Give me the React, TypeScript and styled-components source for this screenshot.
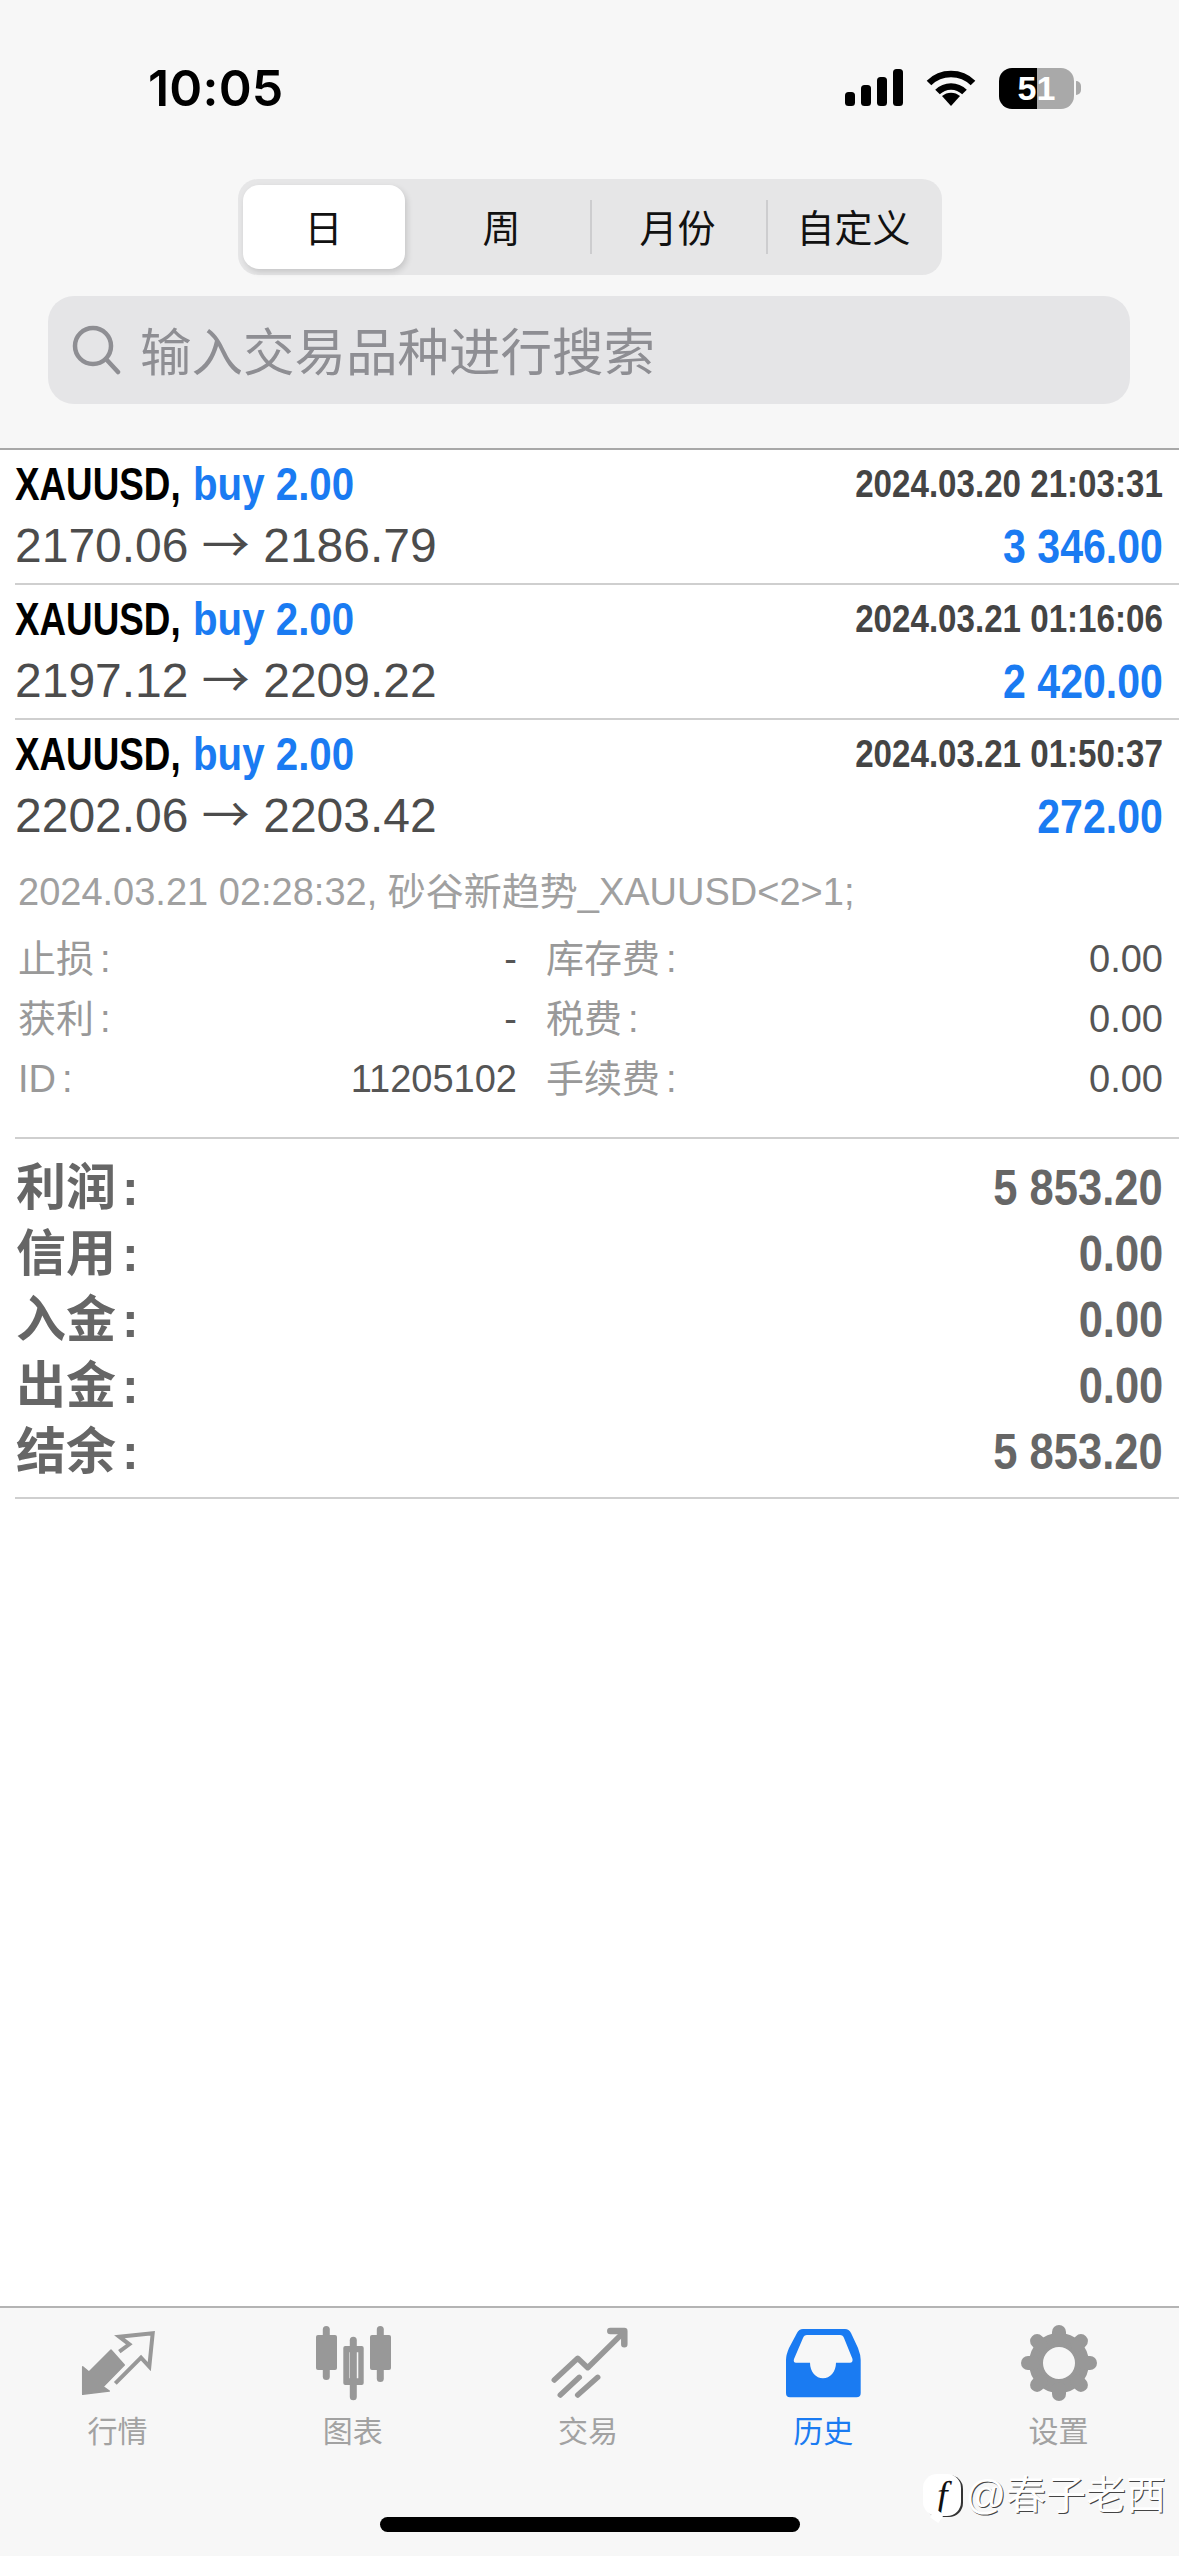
import React from "react";
import styled, { createGlobalStyle } from "styled-components";

const SANS = `"Liberation Sans", "Noto Sans CJK SC", sans-serif`;
const BLUE = "#1a7bf2";
const GREY_ICON = "#989898";

const trades = [
  { open: "2170.06", close: "2186.79", time: "2024.03.20 21:03:31", profit: "3 346.00" },
  { open: "2197.12", close: "2209.22", time: "2024.03.21 01:16:06", profit: "2 420.00" },
  { open: "2202.06", close: "2203.42", time: "2024.03.21 01:50:37", profit: "272.00" },
];

const details = [
  { label: "止损", value: "-", feeLabel: "库存费", fee: "0.00" },
  { label: "获利", value: "-", feeLabel: "税费", fee: "0.00" },
  { label: "ID", value: "11205102", feeLabel: "手续费", fee: "0.00" },
];

const totals = [
  { label: "利润", value: "5 853.20" },
  { label: "信用", value: "0.00" },
  { label: "入金", value: "0.00" },
  { label: "出金", value: "0.00" },
  { label: "结余", value: "5 853.20" },
];

const GlobalStyle = createGlobalStyle`
  html, body {
    margin: 0;
    padding: 0;
    background: #ffffff;
  }
  * {
    box-sizing: border-box;
  }
`;

const SignalIcon = () => (
  <svg width="58" height="38" viewBox="0 0 58 38">
    <rect x="0" y="23" width="10" height="14" rx="3.5" fill="#000" />
    <rect x="16" y="16" width="10" height="21" rx="3.5" fill="#000" />
    <rect x="32" y="8" width="10" height="29" rx="3.5" fill="#000" />
    <rect x="48" y="0" width="10" height="37" rx="3.5" fill="#000" />
  </svg>
);

const WifiIcon = () => (
  <svg width="50" height="38" viewBox="0 0 50 38" fill="none" stroke="#000" strokeWidth="6.5">
    <path d="M3 14 C15 2 35 2 47 14" />
    <path d="M11.5 23 C19 15.5 31 15.5 38.5 23" />
    <path d="M16 27 L25 37 L34 27 C29 22.5 21 22.5 16 27Z" fill="#000" stroke="none" />
  </svg>
);

const MarketIcon = () => (
  <svg width="80" height="80" viewBox="0 0 80 80">
    <path d="M4.7 70.3 L4.7 42.7 L11 48 L33 26 L46.3 41 L25 62.7 L31.3 67 Z" fill={GREY_ICON} stroke={GREY_ICON} strokeWidth="1.5" strokeLinejoin="round" />
    <path d="M41.3 27.7 L51.3 20.3 L41.3 12.7 L74.7 9.3 L71.3 42.7 L63 33.7 L37.3 59.3" fill="none" stroke={GREY_ICON} strokeWidth="4" />
  </svg>
);

const ChartIcon = () => (
  <svg width="80" height="80" viewBox="0 0 80 80" fill={GREY_ICON}>
    <rect x="9.8" y="2" width="7" height="54" rx="3.5" />
    <rect x="3" y="11" width="21" height="35" rx="2" />
    <rect x="36.8" y="12.7" width="7" height="63.5" rx="3.5" />
    <path fillRule="evenodd" d="M32.3 22 H48.7 Q50.7 22 50.7 24 V59 Q50.7 61 48.7 61 H32.3 Q30.3 61 30.3 59 V24 Q30.3 22 32.3 22Z M36.3 28.3 V54.3 H45.3 V28.3Z" />
    <rect x="63.8" y="2" width="7" height="56" rx="3.5" />
    <rect x="57" y="11" width="21" height="35" rx="2" />
  </svg>
);

const TradeIcon = () => (
  <svg width="80" height="80" viewBox="0 0 80 80" fill="none" stroke={GREY_ICON} strokeLinecap="round" strokeLinejoin="round">
    <path d="M6.3 56 L29.7 34.3 L39.7 43.7 L74.7 9.3" strokeWidth="5.5" />
    <path d="M62.3 7 H76.3 V20.3" strokeWidth="6.5" />
    <path d="M12.3 71 L31.3 53.3 M29.7 71 L49.7 53.3" strokeWidth="5.5" />
  </svg>
);

const HistoryIcon = () => (
  <svg width="80" height="80" viewBox="0 0 80 80">
    <path
      fill={BLUE}
      fillRule="evenodd"
      d="M20 5 H62 Q66 5 68 9 L75 24 Q77.7 31 77.7 36 V69 Q77.7 73.3 73.5 73.3 H7 Q3 73.3 3 69 V36 Q3 31 6 24 L14 9 Q16 5 20 5Z
         M24 11 H57 Q60 11 61 14 L69.5 35 Q70 38.7 67 38.7 H53 C53 48 47 54.3 40 54.3 C33 54.3 27 48 27 38.7 H13 Q10 38.7 11 35 L20 14 Q21 11 24 11Z"
    />
  </svg>
);

const GearIcon = () => (
  <svg width="80" height="80" viewBox="0 0 80 80" fill="none" stroke={GREY_ICON}>
    <circle cx="41" cy="39" r="23" strokeWidth="14" />
    {[0, 45, 90, 135, 180, 225, 270, 315].map((deg) => (
      <line key={deg} x1="41" y1="13" x2="41" y2="8" strokeWidth="14" strokeLinecap="round" transform={`rotate(${deg} 41 39)`} />
    ))}
  </svg>
);

const tabs = [
  { label: "行情", icon: <MarketIcon /> },
  { label: "图表", icon: <ChartIcon /> },
  { label: "交易", icon: <TradeIcon /> },
  { label: "历史", icon: <HistoryIcon />, active: true },
  { label: "设置", icon: <GearIcon /> },
];

const App: React.FC = () => {
  return (
    <Page>
      <GlobalStyle />
      <Header>
        <StatusBar>
          <Clock>10:05</Clock>
          <StatusIcons>
            <SignalIcon />
            <WifiIcon />
            <Battery>
              <BatteryBody>51</BatteryBody>
              <BatteryNub />
            </Battery>
          </StatusIcons>
        </StatusBar>
        <SegmentBar>
          <Segment $active>日</Segment>
          <Segment>周</Segment>
          <Segment $divider>月份</Segment>
          <Segment $divider>自定义</Segment>
        </SegmentBar>
        <SearchBox>
          <svg width="50" height="50" viewBox="0 0 50 50" fill="none" stroke="#8e8e93" strokeWidth="4.5" strokeLinecap="round">
            <circle cx="21" cy="21" r="18" />
            <line x1="34" y1="34" x2="46" y2="47" />
          </svg>
          <SearchHint>输入交易品种进行搜索</SearchHint>
        </SearchBox>
      </Header>

      <Content>
        {trades.map((trade, index) => (
          <TradeRow key={trade.time} $last={index === trades.length - 1}>
            <Line>
              <OrderInfo>
                <Symbol>XAUUSD,</Symbol>
                <Side>buy 2.00</Side>
              </OrderInfo>
              <TradeTime>{trade.time}</TradeTime>
            </Line>
            <Line>
              <Prices>
                {trade.open} <Arrow>→</Arrow> {trade.close}
              </Prices>
              <Profit>{trade.profit}</Profit>
            </Line>
          </TradeRow>
        ))}

        <DetailBlock>
          <Comment>2024.03.21 02:28:32, 砂谷新趋势_XAUUSD&lt;2&gt;1;</Comment>
          <DetailGrid>
            {details.map((row) => (
              <DetailRow key={row.label}>
                <DetailCell>
                  <DetailLabel>
                    {row.label}
                    <Colon>:</Colon>
                  </DetailLabel>
                  <DetailValue>{row.value}</DetailValue>
                </DetailCell>
                <DetailCell>
                  <DetailLabel>
                    {row.feeLabel}
                    <Colon>:</Colon>
                  </DetailLabel>
                  <DetailValue>{row.fee}</DetailValue>
                </DetailCell>
              </DetailRow>
            ))}
          </DetailGrid>
        </DetailBlock>

        <Totals>
          {totals.map((row) => (
            <TotalRow key={row.label}>
              <span>
                {row.label}
                <Colon>:</Colon>
              </span>
              <TotalValue>{row.value}</TotalValue>
            </TotalRow>
          ))}
        </Totals>
      </Content>

      <TabBar>
        <TabList>
          {tabs.map((tab) => (
            <Tab key={tab.label}>
              {tab.icon}
              <TabLabel $active={tab.active}>{tab.label}</TabLabel>
            </Tab>
          ))}
        </TabList>
        <HomeIndicator />
        <Watermark>
          <WatermarkLogo>f</WatermarkLogo>
          @春子老西
        </Watermark>
      </TabBar>
    </Page>
  );
};

const Page = styled.div`
  display: flex;
  flex-direction: column;
  width: 1179px;
  height: 2556px;
  overflow: hidden;
  background: #ffffff;
  font-family: ${SANS};
`;

const Header = styled.header`
  padding: 63px 0 44px;
  background: #f7f7f7;
  border-bottom: 2px solid #a8a8a8;
`;

const StatusBar = styled.div`
  display: flex;
  align-items: center;
  justify-content: space-between;
  height: 50px;
  padding: 0 98px 0 148px;
`;

const Clock = styled.span`
  font-family: Inter, ${SANS};
  font-size: 50px;
  font-weight: 600;
  letter-spacing: 0.2px;
  color: #000;
`;

const StatusIcons = styled.div`
  display: flex;
  align-items: center;
  gap: 23px;
`;

const Battery = styled.div`
  display: flex;
  align-items: center;
  gap: 2px;
`;

const BatteryBody = styled.div`
  width: 75px;
  height: 41px;
  border-radius: 13px;
  background: linear-gradient(90deg, #000 0 51%, #a9a9a9 51% 100%);
  color: #fff;
  font-size: 34px;
  font-weight: 700;
  line-height: 41px;
  text-align: center;
`;

const BatteryNub = styled.div`
  width: 5px;
  height: 14px;
  border-radius: 0 7px 7px 0;
  background: #a9a9a9;
`;

const SegmentBar = styled.div`
  display: grid;
  grid-template-columns: repeat(4, 176px);
  width: 704px;
  height: 96px;
  margin: 66px auto 0;
  border-radius: 20px;
  background: #e6e6e7;
`;

const Segment = styled.div<{ $active?: boolean; $divider?: boolean }>`
  position: relative;
  display: flex;
  align-items: center;
  justify-content: center;
  margin: ${(p) => (p.$active ? "6px 9px 6px 5px" : "0")};
  padding-bottom: 4px;
  border-radius: 16px;
  background: ${(p) => (p.$active ? "#ffffff" : "transparent")};
  box-shadow: ${(p) => (p.$active ? "2px 3px 6px rgba(0, 0, 0, 0.14)" : "none")};
  font-size: 38px;
  color: #111;

  &::before {
    content: "";
    display: ${(p) => (p.$divider ? "block" : "none")};
    position: absolute;
    left: 0;
    top: 21px;
    width: 2px;
    height: 54px;
    background: #cdcdcf;
  }
`;

const SearchBox = styled.div`
  display: flex;
  align-items: center;
  gap: 18px;
  height: 108px;
  margin: 21px 49px 0 48px;
  padding-left: 24px;
  border-radius: 26px;
  background: #e5e5e7;
`;

const SearchHint = styled.span`
  padding-bottom: 4px;
  font-size: 51.5px;
  color: #8e8e93;
`;

const Content = styled.main`
  flex: 1;
  background: #ffffff;
`;

const TradeRow = styled.div<{ $last?: boolean }>`
  margin-left: 15px;
  padding: 3px 0 6px;
  border-bottom: ${(p) => (p.$last ? "none" : "2px solid #cfcfcf")};
`;

const Line = styled.div`
  display: flex;
  align-items: center;
  justify-content: space-between;
  height: 62px;
  padding-right: 16px;
`;

const OrderInfo = styled.div`
  display: flex;
  align-items: baseline;
`;

/* the app's bold face is much narrower than Liberation Sans Bold */
const Symbol = styled.span`
  display: inline-block;
  width: 178px;
  font-size: 46px;
  font-weight: 700;
  color: #000;
  white-space: nowrap;
  transform: scaleX(0.8);
  transform-origin: left center;
`;

const Side = styled.span`
  display: inline-block;
  font-size: 46px;
  font-weight: 700;
  color: ${BLUE};
  white-space: nowrap;
  transform: scaleX(0.875);
  transform-origin: left center;
`;

const TradeTime = styled.span`
  display: inline-block;
  font-size: 38px;
  font-weight: 700;
  color: #444;
  transform: scaleX(0.872);
  transform-origin: right center;
`;

const Prices = styled.span`
  font-size: 48px;
  line-height: 62px;
  color: #4c4c4c;
`;

const Arrow = styled.span`
  font-family: "Noto Sans CJK SC", sans-serif;
  font-size: 48px;
  line-height: 0;
`;

const Profit = styled.span`
  display: inline-block;
  font-size: 48px;
  font-weight: 700;
  color: ${BLUE};
  transform: scaleX(0.855);
  transform-origin: right center;
`;

const DetailBlock = styled.section`
  margin-left: 15px;
  padding: 0 16px 28px 3px;
  border-bottom: 2px solid #cfcfcf;
`;

const Comment = styled.div`
  margin-top: 9px;
  height: 60px;
  font-size: 38px;
  line-height: 60px;
  color: #a0a0a0;
`;

const DetailGrid = styled.div`
  margin-top: 7px;
`;

const DetailRow = styled.div`
  display: grid;
  grid-template-columns: 499px 617px;
  gap: 29px;
  height: 60px;
  line-height: 60px;
  font-size: 38px;
`;

const DetailCell = styled.div`
  display: flex;
  justify-content: space-between;
`;

const DetailLabel = styled.span`
  color: #999;
`;

const Colon = styled.span`
  margin-left: 6px;
`;

const DetailValue = styled.span`
  color: #555;
`;

const Totals = styled.section`
  margin-left: 15px;
  padding: 16px 16px 12px 1px;
  border-bottom: 2px solid #cfcfcf;
`;

const TotalRow = styled.div`
  display: flex;
  justify-content: space-between;
  height: 66px;
  line-height: 66px;
  font-size: 50px;
  font-weight: 700;
  color: #666;
`;

const TotalValue = styled.span`
  display: inline-block;
  transform: scaleX(0.87);
  transform-origin: right center;
`;

const TabBar = styled.footer`
  position: relative;
  height: 250px;
  border-top: 2px solid #b4b4b4;
  background: #f7f7f7;
`;

const TabList = styled.nav`
  display: grid;
  grid-template-columns: repeat(5, 1fr);
  padding: 16px 3px 0 0;
`;

const Tab = styled.div`
  display: flex;
  flex-direction: column;
  align-items: center;
  gap: 9px;
`;

const TabLabel = styled.span<{ $active?: boolean }>`
  font-size: 30px;
  line-height: 38px;
  color: ${(p) => (p.$active ? BLUE : "#a2a2a2")};
`;

const HomeIndicator = styled.div`
  width: 420px;
  height: 15px;
  margin: 66px auto 0;
  border-radius: 8px;
  background: #000;
`;

const Watermark = styled.div`
  position: absolute;
  right: 13px;
  bottom: 37px;
  display: flex;
  align-items: center;
  gap: 4px;
  font-size: 40px;
  line-height: 48px;
  color: #fff;
  text-shadow: 1px 1px 0 #444;
`;

const WatermarkLogo = styled.span`
  position: relative;
  display: flex;
  align-items: center;
  justify-content: center;
  width: 38px;
  height: 42px;
  border-radius: 14px;
  background: #fff;
  box-shadow: 2px 1px 0 #333;
  color: #111;
  font-family: "Liberation Serif", serif;
  font-size: 38px;
  font-style: italic;
  text-shadow: none;

  &::after {
    content: "";
    position: absolute;
    left: 9px;
    bottom: -5px;
    width: 10px;
    height: 10px;
    background: #fff;
    transform: rotate(35deg);
  }
`;

export default App;
